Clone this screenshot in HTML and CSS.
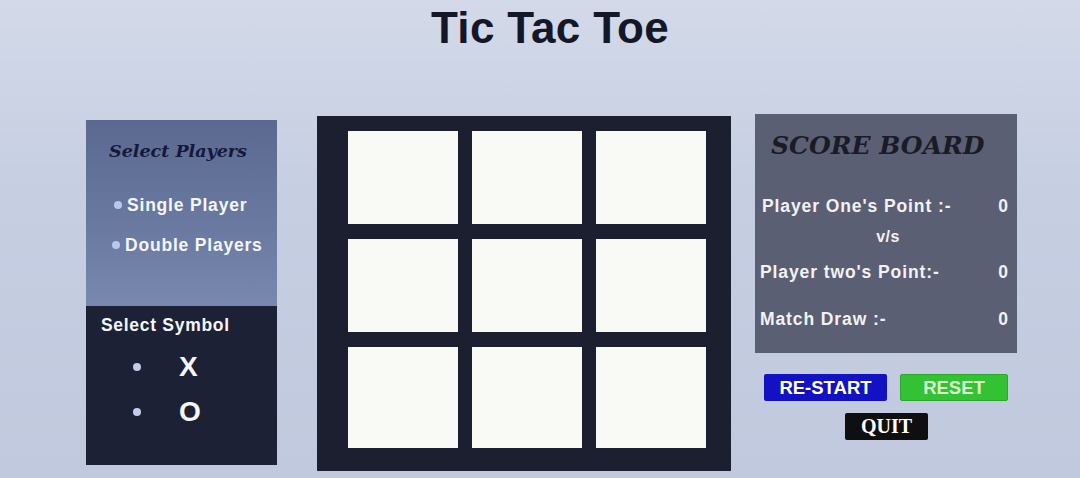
FILE: index.html
```html
<!DOCTYPE html>
<html>
<head>
<meta charset="utf-8">
<link rel="stylesheet" href="styles.css">
</head>
<body>
<h1 class="title">Tic Tac Toe</h1>
<main class="layout">
  <section class="left">
    <div class="players">
      <h2 class="serif-head">Select Players</h2>
      <div class="opt opt-single"><span class="dot"></span>Single Player</div>
      <div class="opt opt-double"><span class="dot"></span>Double Players</div>
    </div>
    <div class="symbols">
      <div class="sym-head">Select Symbol</div>
      <div class="sym"><span class="dot"></span><span class="sym-char">X</span></div>
      <div class="sym"><span class="dot"></span><span class="sym-char">O</span></div>
    </div>
  </section>
  <section class="board">
    <div class="cell"></div><div class="cell"></div><div class="cell"></div>
    <div class="cell"></div><div class="cell"></div><div class="cell"></div>
    <div class="cell"></div><div class="cell"></div><div class="cell"></div>
  </section>
  <section class="right">
    <div class="score">
      <h2 class="score-head">SCORE BOARD</h2>
      <div class="srow r1"><span>Player One's Point :-</span><span>0</span></div>
      <div class="vs">v/s</div>
      <div class="srow r2"><span>Player two's Point:-</span><span>0</span></div>
      <div class="srow r3"><span>Match Draw :-</span><span>0</span></div>
    </div>
    <div class="btns">
      <button class="btn restart">RE-START</button>
      <button class="btn reset">RESET</button>
    </div>
    <div class="btns2">
      <button class="btn quit">QUIT</button>
    </div>
  </section>
</main>
</body>
</html>
```
FILE: styles.css
```css
* { box-sizing: border-box; }
html, body { margin: 0; padding: 0; }
body {
  width: 1080px;
  height: 478px;
  overflow: hidden;
  background: linear-gradient(180deg, #d3d9e8 0%, #c6cee2 40%, #c1c9de 100%);
  font-family: "Liberation Sans", Arial, sans-serif;
}
.title {
  margin: 0;
  padding-top: 4px;
  height: 52px;
  text-align: center;
  font-size: 44px;
  letter-spacing: 0.3px;
  line-height: 48px;
  font-weight: bold;
  color: #141728;
  padding-left: 20px;
}
.layout {
  display: flex;
  align-items: flex-start;
  padding-left: 86px;
  margin-top: 64px;
}
.left {
  width: 191px;
  margin-top: 4px;
  display: flex;
  flex-direction: column;
}
.players {
  height: 186px;
  background: linear-gradient(180deg, #5b6991 0%, #6a7aa0 60%, #7888ae 100%);
  padding-top: 20px;
}
.serif-head {
  margin: 0 0 0 23px;
  font-family: "DejaVu Serif", "Liberation Serif", serif;
  font-style: italic;
  font-weight: bold;
  font-size: 17.5px;
  line-height: 22px;
  color: #14183a;
}
.opt {
  display: flex;
  align-items: center;
  color: #f4f6fb;
  font-weight: bold;
  font-size: 17.5px;
  letter-spacing: 0.8px;
  line-height: 22px;
}
.opt-single { margin: 32px 0 0 28px; }
.opt-double { margin: 18px 0 0 26px; }
.dot {
  width: 8px;
  height: 8px;
  border-radius: 50%;
  background: #b9c8ea;
  margin-right: 5px;
  flex: none;
}
.symbols {
  height: 159px;
  background: #1d2135;
  padding-top: 8px;
}
.sym-head {
  margin-left: 15px;
  color: #f4f5f8;
  font-weight: bold;
  font-size: 17.5px;
  letter-spacing: 0.7px;
  line-height: 22px;
}
.sym {
  display: flex;
  align-items: center;
  margin-left: 47px;
  height: 28px;
}
.symbols .sym:nth-child(2) { margin-top: 17px; }
.symbols .sym:nth-child(3) { margin-top: 17px; }
.sym .dot { margin-right: 38px; background: #c2cdea; }
.sym-char {
  color: #f6f6f6;
  font-weight: bold;
  font-size: 28px;
  line-height: 28px;
}
.board {
  margin-left: 40px;
  width: 414px;
  height: 355px;
  background: #1c1f30;
  padding: 15px 24px 22px 31px;
  display: grid;
  grid-template-columns: 110px 110px 110px;
  grid-template-rows: 93px 93px 101px;
  column-gap: 14px;
  row-gap: 15px;
}
.cell { background: #f9f9f5; }
.right {
  margin-left: 24px;
  width: 262px;
  margin-top: -2px;
}
.score {
  height: 239px;
  background: #5b5f73;
  padding-top: 18px;
}
.score-head {
  margin: 0 0 0 16px;
  font-family: "DejaVu Serif", "Liberation Serif", serif;
  font-style: italic;
  font-weight: bold;
  font-size: 25px;
  line-height: 28px;
  color: #191b27;
}
.srow {
  display: flex;
  justify-content: space-between;
  color: #f2f2f4;
  font-weight: bold;
  font-size: 17.5px;
  letter-spacing: 0.9px;
  line-height: 22px;
  padding-right: 8px;
}
.r1 { margin-top: 35px; padding-left: 7px; }
.r2 { margin-top: 14px; padding-left: 5px; }
.r3 { margin-top: 25px; padding-left: 5px; }
.vs {
  text-align: center;
  color: #f2f2f4;
  font-weight: bold;
  font-size: 16px;
  letter-spacing: 0.5px;
  line-height: 20px;
  margin-top: 10px;
  padding-left: 4px;
}
.btns {
  display: flex;
  gap: 13px;
  margin-top: 21px;
  padding-left: 9px;
}
.btn {
  border: none;
  border-radius: 2px;
  font-family: "Liberation Sans", Arial, sans-serif;
  font-weight: bold;
  font-size: 18.5px;
  height: 27px;
  padding: 0;
  color: #ffffff;
}
.restart { width: 123px; background: #1212c4; }
.reset { width: 108px; background: #33c233; color: #d8f5cf; border: 1px solid #2aa82a; }
.btns2 {
  display: flex;
  padding-left: 90px;
  margin-top: 12px;
}
.quit {
  width: 83px;
  background: #0f0f12;
  font-family: "Liberation Serif", "Times New Roman", serif;
  font-size: 20px;
}
```
